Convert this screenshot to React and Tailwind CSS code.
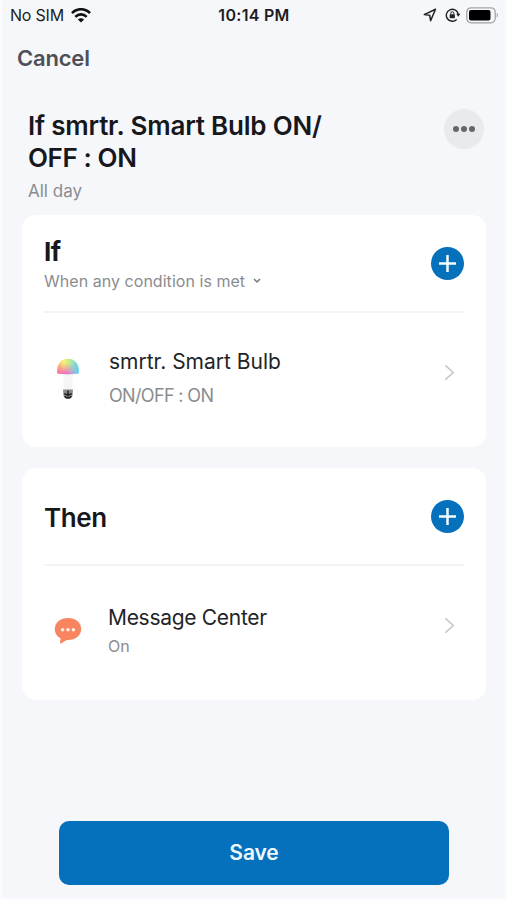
import React from "react";

const WifiIcon = () => (
  <svg width="20" height="15" viewBox="0 0 20 15" fill="none" stroke="#111" strokeWidth="2.6">
    <path d="M1 5.2C6-.1 14-.1 19 5.2" />
    <path d="M4.3 8.8c3.300-3.300 8.100-3.300 11.400 0" />
    <path d="M10 14.500 6.900 11.500c1.700-1.600 4.500-1.600 6.200 0Z" fill="#111" stroke="none" />
  </svg>
);

const LocationIcon = () => (
  <svg width="14" height="14" viewBox="0 0 14 14" fill="none" stroke="#222" strokeWidth="1.500" strokeLinejoin="round">
    <path d="M12.500 1.300 1.300 6.600l5.400.7.900 5.400Z" />
  </svg>
);

const RotationLockIcon = () => (
  <svg width="16" height="14" viewBox="0 0 16 14" fill="none" stroke="#222" strokeWidth="1.400">
    <path d="M11.700 11.400A6 6 0 1 1 13.200 6" />
    <path d="M11.200 5.800h4.200l-2.100 3Z" fill="#222" stroke="none" />
    <rect x="4.700" y="6.200" width="5.200" height="4" rx=".6" fill="#222" stroke="none" />
    <path d="M5.800 6.500V5.200a1.500 1.500 0 0 1 3 0v1.300" strokeWidth="1" />
  </svg>
);

const BatteryIcon = () => (
  <svg width="33" height="17" viewBox="0 0 33 17" fill="none">
    <rect x=".8" y=".8" width="28.400" height="15" rx="4.200" stroke="#a3a4a7" strokeWidth="1.300" />
    <rect x="3" y="3" width="21.500" height="10.600" rx="2" fill="#000" />
    <path d="M30.700 6v4.600c1.700-.7 1.700-3.900 0-4.600Z" fill="#a3a4a7" />
  </svg>
);

const BulbIcon = () => (
  <svg width="24" height="44" viewBox="0 0 24 44">
    <defs>
      <linearGradient id="dome" x1="0" y1="0" x2="1" y2="0">
        <stop offset="0" stopColor="#f9bd6c" />
        <stop offset=".3" stopColor="#f9f070" />
        <stop offset=".55" stopColor="#c5ee90" />
        <stop offset="1" stopColor="#55d3f5" />
      </linearGradient>
      <linearGradient id="pink" x1="0" y1="0" x2="1" y2="0">
        <stop offset="0" stopColor="#f8609f" />
        <stop offset=".5" stopColor="#ee5fdd" />
        <stop offset="1" stopColor="#6cc3f5" stopOpacity=".4" />
      </linearGradient>
      <linearGradient id="fade" x1="0" y1="0" x2="0" y2="1">
        <stop offset=".3" stopColor="#fff" stopOpacity="0" />
        <stop offset="1" stopColor="#fff" />
      </linearGradient>
      <mask id="lower">
        <rect width="24" height="17" fill="url(#fade)" />
      </mask>
    </defs>
    <path d="M7 16h10l-1.300 18H8.300Z" fill="#f5f4f7" />
    <path d="M1.300 15.500C.3 7 4.500.8 12 .8S23.700 7 22.700 15.500Q12 17 1.300 15.500Z" fill="url(#dome)" />
    <path d="M1.300 15.500C.3 7 4.500.8 12 .8S23.700 7 22.700 15.500Q12 17 1.300 15.500Z" fill="url(#pink)" mask="url(#lower)" />
    <path d="M7 31.500h10l-.5 6.500-2.500 3h-4l-2.500-3Z" fill="#8b8b8f" />
    <path d="M8.200 35.500c2 1.800 5.600 1.800 7.600 0M8.500 38.300c2 1.600 5 1.600 7 0M12 32.500v6" stroke="#222" strokeWidth="1.500" fill="none" />
  </svg>
);

const MessageIcon = () => (
  <svg width="28" height="28" viewBox="0 0 28 28">
    <path d="M14 1C6.500 1 .8 5.600.8 12c0 4.200 2.200 7.400 5.700 9.300L6 27l6.700-4H14c7.500 0 13.200-4.600 13.200-11S21.500 1 14 1Z" fill="#f98560" />
    <circle cx="8.600" cy="12.800" r="1.800" fill="#fff0e9" />
    <circle cx="14" cy="12.800" r="1.800" fill="#fff0e9" />
    <circle cx="19.400" cy="12.800" r="1.800" fill="#fff0e9" />
  </svg>
);

const AddButton = ({ label }) => (
  <button aria-label={label} className="mt-px flex size-[33px] items-center justify-center rounded-full bg-[#0570bb]">
    <svg width="17" height="17" viewBox="0 0 17 17" stroke="#f4fbff" strokeWidth="2.500">
      <path d="M8.500 0v17M0 8.500h17" />
    </svg>
  </button>
);

const Chevron = () => (
  <svg width="11" height="17" viewBox="0 0 11 17" fill="none" stroke="#c9c9ca" strokeWidth="1.700">
    <path d="m1.400 1.300 7.800 7.200-7.800 7.200" />
  </svg>
);

const App = () => {
  return (
    <div className="h-[900px] w-[507px] overflow-hidden bg-[#fbfcfe] pr-[2px] pb-[2px] pl-[2px] font-['Inter',sans-serif] whitespace-nowrap">
      <div className="flex h-full flex-col bg-[#f5f7fb]">
        {/* Status bar */}
        <div className="grid h-[30px] shrink-0 grid-cols-3 items-center pr-[6px] pl-2 text-[#1d1d20]">
          <div className="flex items-center gap-[7px]">
            <span className="text-base tracking-[-0.2px]">No SIM</span>
            <WifiIcon />
          </div>
          <span className="-ml-px text-center text-base font-semibold tracking-[0.3px]">10:14 PM</span>
          <div className="flex items-center justify-end">
            <LocationIcon />
            <span className="ml-2"><RotationLockIcon /></span>
            <span className="ml-[5px]"><BatteryIcon /></span>
          </div>
        </div>

        <div className="flex h-[56px] shrink-0 items-center pl-[15px]">
          <button className="text-[22px] font-semibold tracking-[-0.2px] text-[#4f5056]">Cancel</button>
        </div>

        {/* Scene title */}
        <div className="flex h-[129px] shrink-0 justify-between pt-6 pr-[21px] pl-[26px]">
          <div>
            <h1 className="text-[26px] leading-8 font-semibold tracking-[-0.2px] text-[#17181c]">
              If smrtr. Smart Bulb ON/
              <br />
              <span className="tracking-[-0.4px]">OFF : ON</span>
            </h1>
            <p className="mt-[5px] text-[17px] leading-6 text-[#8b8c90]">All day</p>
          </div>
          <button aria-label="More" className="-mt-px flex size-10 items-center justify-center gap-[2px] rounded-full bg-[#e9eaed]">
            <span className="size-[6px] rounded-full bg-[#66676b]" />
            <span className="size-[6px] rounded-full bg-[#66676b]" />
            <span className="size-[6px] rounded-full bg-[#66676b]" />
          </button>
        </div>

        <div className="flex flex-col gap-[21px] pr-[19px] pl-5">
          <section className="h-[232px] rounded-[14px] bg-white px-[22px]">
            <div className="flex h-[98px] items-center justify-between border-b-2 border-[#f4f4f5]">
              <div className="mt-[3px]">
                <h2 className="text-[26px] leading-8 font-bold tracking-[-0.6px] text-[#17181c]">If</h2>
                <button className="flex items-center gap-2 text-base leading-[26px] tracking-[0.04px] text-[#8b8c90]">
                  When any condition is met
                  <svg width="8" height="6" viewBox="0 0 8 6" fill="none" stroke="#77787c" strokeWidth="1.500">
                    <path d="m1 1 3 3 3-3" />
                  </svg>
                </button>
              </div>
              <AddButton label="Add condition" />
            </div>
            <div className="flex h-[134px] items-center pr-[9px] pl-3">
              <BulbIcon />
              <div className="-mt-[5px] ml-[29px] flex-1">
                <p className="text-[21px] leading-8 text-[#232427]">smrtr. Smart Bulb</p>
                <p className="mt-1 text-[18px] leading-7 tracking-[-0.65px] text-[#8b8c90]">ON/OFF : ON</p>
              </div>
              <span className="-mt-[15px]"><Chevron /></span>
            </div>
          </section>

          <section className="h-[232px] rounded-[14px] bg-white px-[22px]">
            <div className="flex h-[98px] items-center justify-between border-b-2 border-[#f4f4f5]">
              <h2 className="mt-[3px] text-[26px] leading-8 font-semibold tracking-[-0.4px] text-[#17181c]">Then</h2>
              <AddButton label="Add action" />
            </div>
            <div className="flex h-[134px] items-center pr-[9px] pl-[10px]">
              <span className="-mt-[5px]"><MessageIcon /></span>
              <div className="-mt-[6px] ml-[26px] flex-1">
                <p className="text-[21px] leading-8 tracking-[-0.3px] text-[#232427]">Message Center</p>
                <p className="text-base leading-[25px] text-[#8b8c90]">On</p>
              </div>
              <span className="-mt-[15px]"><Chevron /></span>
            </div>
          </section>
        </div>

        <button className="mt-[121px] mr-[56px] ml-[57px] h-[64px] shrink-0 rounded-[10px] bg-[#0570bb] text-[21px] font-semibold tracking-[-0.1px] text-[#eef9ff]">
          Save
        </button>
      </div>
    </div>
  );
};

export default App;
